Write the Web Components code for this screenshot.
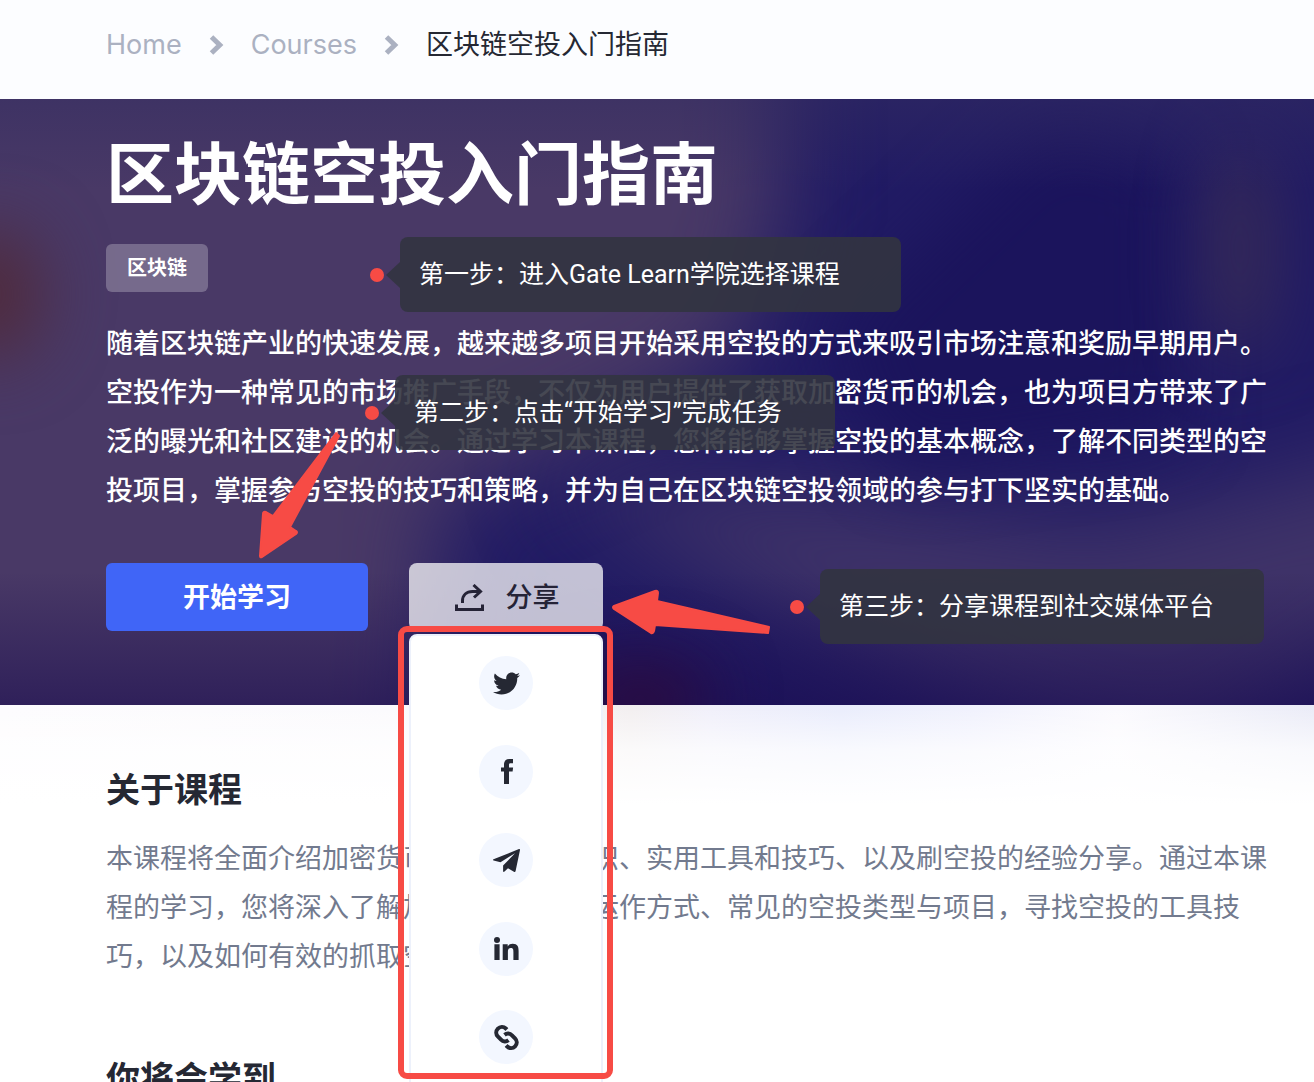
<!DOCTYPE html>
<html lang="zh-CN">
<head>
<meta charset="UTF-8">
<meta name="viewport" content="width=device-width, initial-scale=1.0">
<title>区块链空投入门指南</title>
<style>
  body {
    margin: 0;
    background: #fff;
    color: #252833;
    font-family: Inter, "Noto Sans CJK SC", sans-serif;
    font-size: 27px;
  }
</style>
</head>
<body>
<course-page>
  <bread-crumb slot="top">
    <crumb-link href="#home">Home</crumb-link>
    <crumb-link href="#courses">Courses</crumb-link>
    <span>区块链空投入门指南</span>
  </bread-crumb>

  <course-hero slot="hero">
    <span slot="title">区块链空投入门指南</span>
    <course-tag slot="tags">区块链</course-tag>
    <span slot="intro">随着区块链产业的快速发展，越来越多项目开始采用空投的方式来吸引市场注意和奖励早期用户。空投作为一种常见的市场推广手段，不仅为用户提供了获取加密货币的机会，也为项目方带来了广泛的曝光和社区建设的机会。通过学习本课程，您将能够掌握空投的基本概念，了解不同类型的空投项目，掌握参与空投的技巧和策略，并为自己在区块链空投领域的参与打下坚实的基础。</span>
    <start-button slot="actions">开始学习</start-button>
    <share-menu slot="actions">分享</share-menu>
  </course-hero>

  <course-section>
    <span slot="heading">关于课程</span>
    本课程将全面介绍加密货币空投的基础知识、实用工具和技巧、以及刷空投的经验分享。通过本课程的学习，您将深入了解加密货币空投的运作方式、常见的空投类型与项目，寻找空投的工具技巧，以及如何有效的抓取空投机会。
  </course-section>
  <course-section>
    <span slot="heading">你将会学到</span>
  </course-section>

  <guide-layer slot="guide">
    <step-note style="--x: 370px; --y: 237px; --w: 501px">第一步：进入Gate Learn学院选择课程</step-note>
    <step-note style="--x: 365px; --y: 375px; --w: 440px">第二步：点击“开始学习”完成任务</step-note>
    <step-note style="--x: 790px; --y: 569px; --w: 444px">第三步：分享课程到社交媒体平台</step-note>
  </guide-layer>
</course-page>

<script>
function define(name, html) {
  const template = document.createElement('template');
  template.innerHTML = html;
  customElements.define(name, class extends HTMLElement {
    constructor() {
      super();
      this.attachShadow({mode: 'open'}).appendChild(template.content.cloneNode(true));
    }
  });
}

define('course-page', `
  <style>
    :host {
      display: block;
      position: relative;
      height: 100vh;
      overflow: hidden;
    }
    /* the gradients are the soft light that the banner throws on the page */
    main {
      display: flex;
      flex-direction: column;
      gap: 74px;
      padding: 61px 32px 0 106px;
      background:
        linear-gradient(rgba(255, 255, 255, 0), rgba(255, 255, 255, .7) 45%, #fff) top / 100% 100px no-repeat,
        linear-gradient(90deg, #fdfcfe 0, #fbfafd 30%, #f2eeef 48%, #f0effa 54%, #e9ecfc 64%, #f0f1fd 74%, #fbfafe 85%, #eaebf7 100%) top / 100% 100px no-repeat;
    }
  </style>
  <slot name="top"></slot>
  <slot name="hero"></slot>
  <main><slot></slot></main>
  <slot name="guide"></slot>
`);

define('crumb-link', `
  <style>
    :host {
      display: flex;
      align-items: center;
      gap: 27px;
    }
    a {
      color: #abb1c1;
      text-decoration: none;
    }
    svg {
      width: 15px;
      height: 20px;
      fill: none;
      stroke: #abb1c1;
      stroke-width: 5;
    }
  </style>
  <a><slot></slot></a>
  <svg viewBox="0 0 15 20" aria-hidden="true"><path d="M2.500 2l8.300 8-8.300 8"/></svg>
`);

define('bread-crumb', `
  <style>
    :host {
      display: block;
      padding: 25px 32px 34px 106px;
      background: #fcfdff;
      line-height: 40px;
    }
    nav {
      display: flex;
      align-items: center;
      gap: 27px;
    }
  </style>
  <nav aria-label="Breadcrumb"><slot></slot></nav>
`);

define('course-tag', `
  <style>
    :host {
      display: block;
      padding: 0 21px;
      border-radius: 6px;
      background: rgba(255, 255, 255, .25);
      font-size: 20px;
      font-weight: 700;
      line-height: 48px;
    }
  </style>
  <slot></slot>
`);

define('course-hero', `
  <style>
    :host {
      display: block;
      position: relative;
      z-index: 1;
      color: #fff;
    }
    .backdrop {
      position: absolute;
      inset: 0;
      width: 100%;
      height: 100%;
    }
    filter {
      color-interpolation-filters: sRGB;
    }
    .content {
      position: relative;
      padding: 29px 32px 74px 106px;
    }
    h1 {
      margin: 0;
      font-size: 68px;
      font-weight: 700;
      line-height: 92px;
    }
    .tags {
      display: flex;
      gap: 16px;
      margin-top: 24px;
    }
    p {
      margin: 27px 0 48px;
      font-weight: 500;
      line-height: 49px;
    }
    .actions {
      display: flex;
      gap: 41px;
    }
  </style>
  <svg class="backdrop" viewBox="0 0 1314 606" preserveAspectRatio="none" aria-hidden="true">
    <defs>
      <filter id="soft" x="-50%" y="-50%" width="200%" height="200%"><feGaussianBlur stdDeviation="45"/></filter>
      <filter id="softer" x="-150%" y="-150%" width="400%" height="400%"><feGaussianBlur stdDeviation="34"/></filter>
      <linearGradient id="shade" x2="0" y2="1">
        <stop offset="0.78" stop-color="#1a0c50" stop-opacity="0"/>
        <stop offset="1" stop-color="#1a0c50" stop-opacity=".55"/>
      </linearGradient>
      <linearGradient id="top" x2="0" y2="1">
        <stop offset="0" stop-color="#332c62" stop-opacity=".5"/>
        <stop offset="0.15" stop-color="#332c62" stop-opacity="0"/>
      </linearGradient>
    </defs>
    <rect width="1314" height="606" fill="#211b64"/>
    <path d="M-150-150H780V120L730 260 600 330 440 400 420 750H-150z" fill="#493966" filter="url(#soft)"/>
    <path d="M540 380L800 390 1100 430 1450 340V500L1180 670 1000 620 740 490z" fill="#3f3368" filter="url(#soft)"/>
    <path d="M820 240L1050 20 1180 60 1180 330 900 370z" fill="#1b145c" filter="url(#softer)"/>
    <ellipse cx="1240" cy="150" rx="32" ry="110" fill="#382c56" filter="url(#softer)"/>
    <ellipse cx="-10" cy="195" rx="50" ry="65" fill="#502a3a" filter="url(#softer)"/>
    <rect width="1314" height="606" fill="url(#top)"/>
    <rect width="1314" height="606" fill="url(#shade)"/>
    <ellipse cx="640" cy="600" rx="70" ry="35" fill="#2c0a3c" filter="url(#softer)"/>
  </svg>
  <div class="content">
    <h1><slot name="title"></slot></h1>
    <div class="tags"><slot name="tags"></slot></div>
    <p><slot name="intro"></slot></p>
    <div class="actions"><slot name="actions"></slot></div>
  </div>
`);

define('start-button', `
  <style>
    :host {
      display: block;
    }
    button {
      width: 262px;
      height: 68px;
      padding: 0 0 4px;
      border: 0;
      border-radius: 6px;
      background: #4065f7;
      color: #fff;
      font: inherit;
      font-weight: 700;
      cursor: pointer;
    }
  </style>
  <button type="button"><slot></slot></button>
`);

define('share-menu', `
  <style>
    :host {
      display: block;
      position: relative;
    }
    button {
      display: flex;
      align-items: center;
      justify-content: center;
      gap: 22px;
      width: 194px;
      height: 68px;
      padding: 0 0 4px 2px;
      border: 0;
      border-radius: 8px;
      background: rgba(255, 255, 255, .73);
      color: #252336;
      font: inherit;
      font-weight: 500;
      cursor: pointer;
    }
    button svg {
      width: 29px;
      height: 27px;
      margin-top: 4px;
      fill: none;
      stroke: currentColor;
      stroke-width: 3;
    }
    ul {
      position: absolute;
      top: calc(100% + 3px);
      left: 0;
      right: 0;
      display: flex;
      flex-direction: column;
      align-items: center;
      justify-content: space-between;
      height: 408px;
      margin: 0;
      padding: 20px 0 40px;
      border: 2px solid #edf1fb;
      border-radius: 8px;
      background: #fff;
      list-style: none;
    }
    a {
      display: flex;
      align-items: center;
      justify-content: center;
      width: 54px;
      height: 54px;
      border-radius: 50%;
      background: #f3f7ff;
      color: #252833;
    }
    a svg {
      display: block;
      width: 27px;
      height: 27px;
      fill: currentColor;
    }
    a .line {
      fill: none;
      stroke: currentColor;
      stroke-width: 4;
    }
  </style>
  <button type="button" aria-haspopup="true" aria-expanded="true">
    <svg viewBox="0 0 29 27" aria-hidden="true">
      <path d="M1.500 20.500v5h26v-5"/>
      <path d="M7.500 19v-2c0-6 4-9.500 10-9.500h8"/>
      <path d="M18.500 1l7 6.500-6.500 6"/>
    </svg>
    <span><slot></slot></span>
  </button>
  <ul>
    <li><a href="#twitter" aria-label="Twitter"><svg viewBox="0 0 512 512"><path d="M459.37 151.716c.325 4.548.325 9.097.325 13.645 0 138.72-105.583 298.558-298.558 298.558-59.452 0-114.68-17.219-161.137-47.106 8.447.974 16.568 1.299 25.34 1.299 49.055 0 94.213-16.568 130.274-44.832-46.132-.975-84.792-31.188-98.112-72.772 6.498.974 12.995 1.624 19.818 1.624 9.421 0 18.843-1.3 27.614-3.573-48.081-9.747-84.143-51.98-84.143-102.985v-1.299c13.969 7.797 30.214 12.67 47.431 13.319-28.264-18.843-46.781-51.005-46.781-87.391 0-19.492 5.197-37.36 14.294-52.954 51.655 63.675 129.3 105.258 216.365 109.807-1.624-7.797-2.599-15.918-2.599-24.04 0-57.828 46.782-104.934 104.934-104.934 30.213 0 57.502 12.67 76.67 33.137 23.715-4.548 46.456-13.32 66.599-25.34-7.798 24.366-24.366 44.833-46.132 57.827 21.117-2.273 41.584-8.122 60.426-16.243-14.292 20.791-32.161 39.308-52.628 54.253z"/></svg></a></li>
    <li><a href="#facebook" aria-label="Facebook"><svg viewBox="-8 -1 27 27"><path d="M12 .1v4.100H9.700C8.300 4.200 8 4.900 8 5.900v2.500h4.100l-.5 4.200H8V25H3V12.600H0V8.400h3V5.300C3 2 5 0 8.300 0c1.500 0 3.200.1 3.700.1z"/></svg></a></li>
    <li><a href="#telegram" aria-label="Telegram"><svg viewBox="0 -2 27 27"><path d="M.5 10.200L26 .1c.7-.2 1.100.2 1 .9l-4.400 21c-.2 1-.9 1.200-1.700.8L15 19.300l-3.500 3.300c-.8.7-1.400.4-1.400-.7v-5.500L22 4.300 7.500 13.200.6 11.600c-.8-.3-.8-1-.1-1.400z"/></svg></a></li>
    <li><a href="#linkedin" aria-label="LinkedIn"><svg viewBox="-1 -2 27 27"><circle cx="3" cy="3" r="3"/><path d="M.4 7.300h5.200V23H.4zM8.700 7.300h5v2.100c.8-1.500 2.600-2.600 5-2.600 4.900 0 5.900 3.100 5.900 7.200V23h-5.200v-8c0-2-.1-4-2.600-4s-2.900 1.900-2.900 3.900V23H8.700z"/></svg></a></li>
    <li><a href="#copy" aria-label="Link"><svg viewBox="-1 -1 27 27"><path class="line" d="M12.800 4.600l-1-1.100C9.500 1.300 6.100 1.500 3.900 3.700 1.600 6.100 1.700 9.400 4 11.700l3 3c2.100 2.100 5.200 2.300 7.500.5"/><path class="line" transform="rotate(180 12.500 12.500)" d="M12.800 4.600l-1-1.100C9.500 1.300 6.100 1.500 3.900 3.700 1.600 6.100 1.700 9.400 4 11.700l3 3c2.100 2.100 5.200 2.300 7.500.5"/></svg></a></li>
  </ul>
`);

define('course-section', `
  <style>
    :host {
      display: block;
    }
    h2 {
      margin: 0;
      font-size: 34px;
      font-weight: 700;
      line-height: 48px;
    }
    p {
      margin: 20px 0 0;
      color: #727a8e;
      line-height: 49px;
    }
  </style>
  <h2><slot name="heading"></slot></h2>
  <p><slot></slot></p>
`);

/* arrows and frame lie over the page, next to the step notes */
define('guide-layer', `
  <style>
    :host {
      position: absolute;
      inset: 0;
      z-index: 2;
      pointer-events: none;
    }
    svg {
      position: absolute;
      top: 0;
      left: 0;
      width: 1314px;
      height: 1082px;
      fill: #f74b45;
      stroke: #f74b45;
      stroke-width: 2;
      stroke-linejoin: round;
    }
    .frame {
      fill: none;
      stroke-width: 6;
    }
  </style>
  <svg viewBox="0 0 1314 1082" aria-hidden="true">
    <path d="M336 433l3 3-49 91 6 4q2 1 0 3l-34 23q-2 1-2-1l3-42q0-3 3-2l7 4z"/>
    <path d="M769 627l-1 6-113-8-1 6q-1 3-3 2l-37-24q-2-2 0-3l41-15q3-1 3 2l-1 8z"/>
    <rect class="frame" x="401" y="629" width="209" height="447" rx="6"/>
  </svg>
  <slot></slot>
`);

define('step-note', `
  <style>
    :host {
      position: absolute;
      left: var(--x);
      top: var(--y);
      display: flex;
      align-items: center;
      color: #fff;
      font-family: Roboto, "Noto Sans CJK SC", sans-serif;
      font-size: 25px;
      line-height: 75px;
    }
    i {
      width: 14px;
      height: 14px;
      border-radius: 50%;
      background: #f74b45;
    }
    b {
      margin-left: 2px;
      border: solid transparent;
      border-width: 13px 14px 13px 0;
      border-right-color: rgba(50, 52, 64, .9);
    }
    span {
      box-sizing: border-box;
      width: var(--w);
      padding: 0 19px;
      border-radius: 8px;
      background: rgba(50, 52, 64, .9);
      white-space: nowrap;
    }
  </style>
  <i></i><b></b><span><slot></slot></span>
`);

// the anchor inside a crumb takes its address from the host
document.querySelectorAll('crumb-link').forEach(el => {
  el.shadowRoot.querySelector('a').href = el.getAttribute('href');
});
</script>
</body>
</html>
